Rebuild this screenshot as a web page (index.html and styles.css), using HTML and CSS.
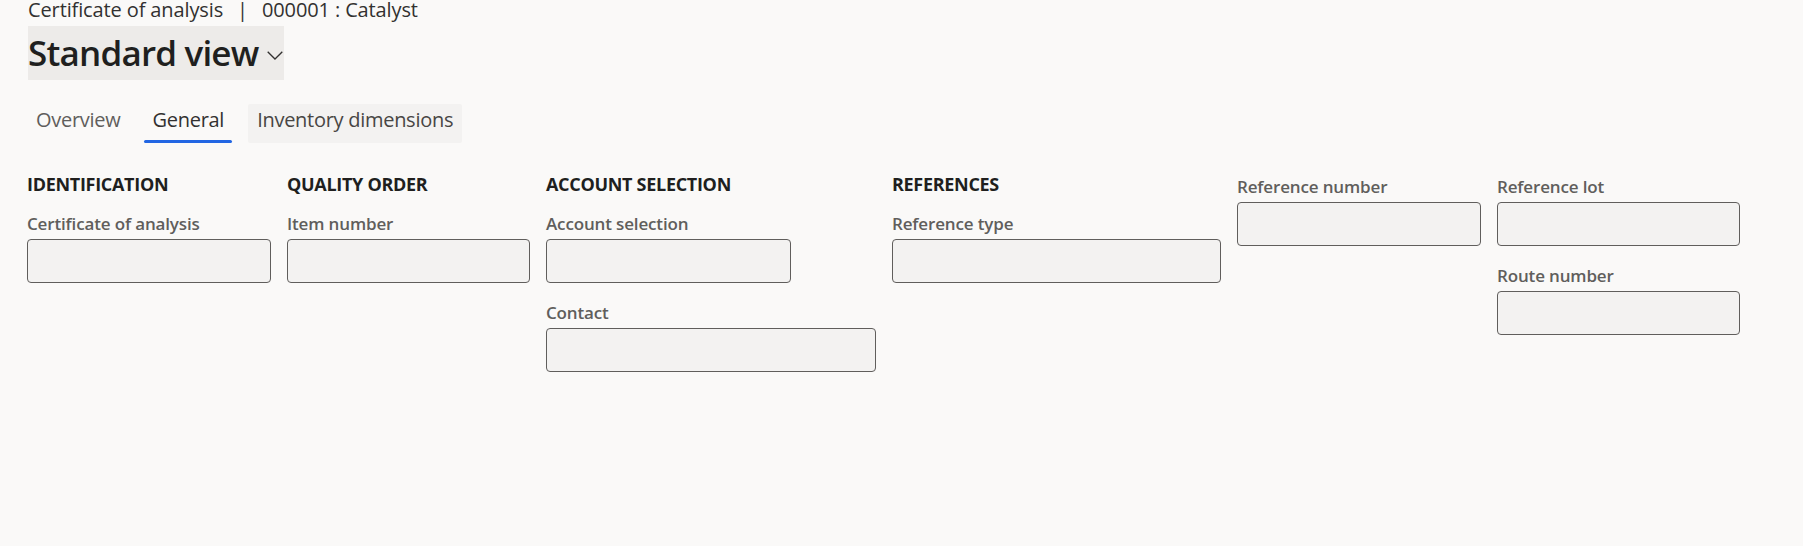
FILE: index.html
```html
<!DOCTYPE html>
<html lang="en">
<head>
<meta charset="utf-8">
<title>Certificate of analysis</title>
<link rel="stylesheet" href="styles.css">
</head>
<body>
<div class="page">
  <div class="breadcrumb">Certificate of analysis<span class="sep">|</span>000001 : Catalyst</div>
  <div class="view-title">
    <span class="view-name">Standard view</span>
    <svg class="chevron" width="16" height="9" viewBox="0 0 16 9" aria-hidden="true"><path d="M0.7 0.7 L8 8 L15.3 0.7" fill="none" stroke="#323130" stroke-width="1.3"/></svg>
  </div>
  <div class="tabs">
    <div class="tab">Overview</div>
    <div class="tab active">General</div>
    <div class="tab hover">Inventory dimensions</div>
  </div>
  <div class="sections">
    <div class="section s1">
      <div class="section-title">IDENTIFICATION</div>
      <div class="field"><div class="label">Certificate of analysis</div><div class="input"></div></div>
    </div>
    <div class="section s2">
      <div class="section-title">QUALITY ORDER</div>
      <div class="field"><div class="label">Item number</div><div class="input"></div></div>
    </div>
    <div class="section s3">
      <div class="section-title">ACCOUNT SELECTION</div>
      <div class="field"><div class="label">Account selection</div><div class="input narrow"></div></div>
      <div class="field"><div class="label">Contact</div><div class="input"></div></div>
    </div>
    <div class="section s4">
      <div class="section-title">REFERENCES</div>
      <div class="field"><div class="label">Reference type</div><div class="input"></div></div>
    </div>
    <div class="section s5 no-title">
      <div class="field"><div class="label">Reference number</div><div class="input"></div></div>
    </div>
    <div class="section s6 no-title">
      <div class="field"><div class="label">Reference lot</div><div class="input"></div></div>
      <div class="field"><div class="label">Route number</div><div class="input"></div></div>
    </div>
  </div>
</div>
</body>
</html>
```

FILE: styles.css
```css
* { box-sizing: border-box; }
html, body { margin: 0; padding: 0; }
body {
  background: #faf9f8;
  font-family: "Open Sans", "Noto Sans", sans-serif;
  color: #323130;
  width: 1803px;
  height: 546px;
  overflow: hidden;
}
.page { padding-left: 27px; }
.breadcrumb {
  margin-left: 1px;
  font-size: 20px;
  line-height: 20px;
  letter-spacing: -0.12px;
  color: #323130;
  white-space: nowrap;
}
.breadcrumb .sep { margin: 0 14px; }
.view-title {
  margin-top: 6px;
  margin-left: 1px;
  display: inline-flex;
  align-items: center;
  height: 54px;
  background: #edebe9;
  padding-right: 1px;
}
.view-name {
  font-size: 35px;
  line-height: 54px;
  font-weight: 600;
  letter-spacing: -0.8px;
  color: #201f1e;
}
.chevron { margin-left: 9px; margin-top: 5px; }
.tabs {
  display: flex;
  gap: 16px;
  margin-top: 24px;
  margin-left: 1px;
}
.tab {
  position: relative;
  height: 39px;
  padding: 2px 8px 9px;
  font-size: 20px;
  line-height: 28px;
  letter-spacing: -0.28px;
  color: #605e5c;
  border-radius: 2px;
  white-space: nowrap;
}
.tab.active { color: #323130; }
.tab.active::after {
  content: "";
  position: absolute;
  left: 0; right: 0; bottom: 0;
  height: 3px;
  border-radius: 2px;
  background: #2266e3;
}
.tab.hover { background: #f3f2f1; color: #484644; padding: 2px 9px 9px; }
.sections {
  display: flex;
  gap: 16px;
  margin-top: 29px;
  align-items: flex-start;
}
.section { flex: none; }
.section-title {
  font-size: 18px;
  line-height: 24px;
  font-weight: 700;
  letter-spacing: -0.3px;
  color: #201f1e;
  margin-bottom: 17px;
  white-space: nowrap;
}
.no-title { padding-top: 4px; }
.s1 { width: 244px; }
.s2 { width: 243px; }
.s3 { width: 330px; }
.s4 { width: 329px; }
.s5 { width: 244px; }
.s6 { width: 243px; }
.field { margin-bottom: 19px; }
.label {
  font-size: 17px;
  line-height: 22px;
  font-weight: 600;
  letter-spacing: -0.15px;
  color: #605e5c;
  margin-bottom: 4px;
  white-space: nowrap;
}
.input {
  height: 44px;
  width: 100%;
  background: #f3f2f1;
  border: 1px solid #605e5c;
  border-radius: 4px;
}
.input.narrow { width: 245px; }
```
